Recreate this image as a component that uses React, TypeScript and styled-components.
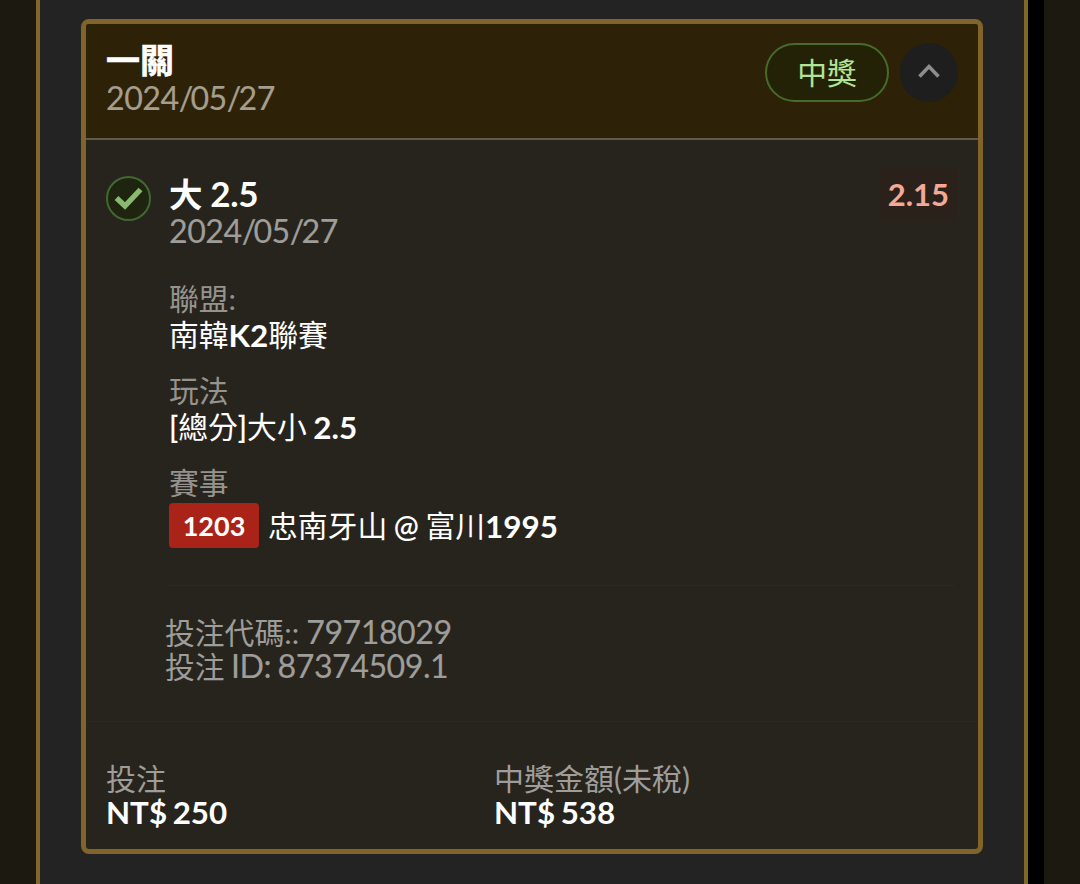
import { ReactNode } from 'react'
import styled, { createGlobalStyle } from 'styled-components'

const GlobalStyle = createGlobalStyle`
  * {
    box-sizing: border-box;
  }

  body {
    margin: 0;
    background: #1c1911;
    color: #fff;
    font-family: Lato, 'Noto Sans CJK TC', sans-serif;
    font-size: 29.8px;
    line-height: 34px;
    word-spacing: -1px;
    overflow: hidden;
  }
`

const Page = styled.div`
  display: flex;
  width: 1080px;
  height: 884px;
  padding-left: 36px;
`

const Panel = styled.main`
  width: 992px;
  padding: 19px 40px 0 41px;
  background: #232323;
  border: solid #82672b;
  border-width: 0 4px 0 4px;
`

const Gutter = styled.div`
  width: 16px;
  background: #000;
`

const Ticket = styled.article`
  display: flex;
  flex-direction: column;
  width: 902px;
  height: 835px;
  border: 5px solid #80642a;
  border-radius: 8px;
  background: #27241e;
  overflow: hidden;
`

const TicketHeader = styled.header`
  display: flex;
  align-items: flex-start;
  flex: 0 0 116px;
  padding: 19px 20px 0 20px;
  border-bottom: 2px solid #625b46;
  background: #2d2208;
`

const Heading = styled.div`
  flex: 1;
`

const HeaderTitle = styled.div`
  height: 39px;
  font-size: 34px;
  font-weight: 700;
  line-height: 34px;
  -webkit-text-stroke: 0.6px #fff;
`

const SelectionTitle = styled.div`
  height: 39px;
  font-size: 33.5px;
  font-weight: 700;
  line-height: 34px;
  word-spacing: -0.5px;
  white-space: nowrap;

  span {
    font-size: 35px;
    letter-spacing: -0.2px;
  }
`

const Muted = styled.div<{ $warm?: boolean }>`
  height: 34px;
  color: ${(props) => (props.$warm ? '#a59e8f' : '#9f9d9a')};
  white-space: nowrap;
`

const Num = styled.span`
  font-size: 32.2px;
  letter-spacing: -0.5px;
  line-height: 30px;
  -webkit-text-stroke: 0.15px currentColor;
`

const Slash = styled.span`
  letter-spacing: -2.8px;
`

const Status = styled.div`
  display: flex;
  align-items: center;
  justify-content: center;
  width: 124px;
  height: 59px;
  margin-right: 11px;
  border: 2px solid #466b2b;
  border-radius: 30px;
  background: #232206;
  color: #b3e397;
`

const Toggle = styled.button`
  display: flex;
  align-items: center;
  justify-content: center;
  width: 58px;
  height: 59px;
  padding: 0 0 3px;
  border: 0;
  border-radius: 50%;
  background: #1e1e1f;
`

const Selection = styled.section`
  display: flex;
  align-items: flex-start;
  flex: 0 0 582px;
  padding: 36px 24px 0 20px;
  border-bottom: 1px solid #2b2924;
`

const CheckIcon = styled.svg`
  flex: none;
  width: 45px;
  height: 45px;
  margin-right: 18px;
`

const Details = styled.div`
  flex: 1;
`

const SelectionTop = styled.div`
  display: flex;
  justify-content: space-between;
`

const Odds = styled.div`
  height: 54px;
  margin: -8px -4px 0 0;
  padding: 0 9px;
  border-radius: 4px;
  background: #2b211b;
  color: #f3a898;
  font-size: 31px;
  font-weight: 700;
  line-height: 53px;
`

const Fields = styled.dl`
  display: flex;
  flex-direction: column;
  gap: 20px;
  margin: 31px 0 0;
`

const FieldBox = styled.div`
  height: 72px;
`

const FieldLabel = styled.dt`
  height: 37px;
  color: #96938e;
  line-height: 37px;
`

const FieldValue = styled.dd`
  display: flex;
  align-items: center;
  margin: 0;
  line-height: 36px;
  white-space: pre;

  b {
    font-size: 31.4px;
    font-weight: 700;
  }

  i {
    font-style: normal;
    font-weight: 600;
  }
`

const Match = styled.div`
  display: flex;
  align-items: center;
  margin-top: 2px;
`

const MatchCode = styled.span`
  width: 90px;
  height: 45px;
  margin-right: 9px;
  border-radius: 4px;
  background: #a92318;
  font-size: 27px;
  font-weight: 700;
  line-height: 46px;
  text-align: center;
`

const Codes = styled.div`
  margin-top: 49px;
  padding-top: 30px;
  border-top: 1px solid #2c2a24;

  > div {
    margin-left: -4px;
    word-spacing: -0.5px;
  }

  > div + div {
    word-spacing: -1.2px;
  }
`

const Totals = styled.footer`
  display: grid;
  grid-template-columns: 388px 1fr;
  padding: 39px 20px 0 20px;
  font-size: 30px;
`

const Amount = styled.div`
  font-size: 31.3px;
  font-weight: 700;
  line-height: 34px;
  word-spacing: -2px;
`

const TicketDate = ({ value }: { value: string }) => {
  const [year, month, day] = value.split('/')

  return (
    <Num>
      {year}
      <Slash>/</Slash>
      {month}
      <Slash>/</Slash>
      {day}
    </Num>
  )
}

const Field = ({ label, children }: { label: string; children: ReactNode }) => (
  <FieldBox>
    <FieldLabel>{label}</FieldLabel>
    <FieldValue>{children}</FieldValue>
  </FieldBox>
)

const Total = ({ label, value }: { label: string; value: number }) => (
  <div>
    <Muted>{label}</Muted>
    <Amount>NT$ {value}</Amount>
  </div>
)

const App = () => (
  <>
    <GlobalStyle />
    <Page>
      <Panel>
        <Ticket>
          <TicketHeader>
            <Heading>
              <HeaderTitle>一關</HeaderTitle>
              <Muted $warm>
                <TicketDate value="2024/05/27" />
              </Muted>
            </Heading>
            <Status>中獎</Status>
            <Toggle aria-label="收合">
              <svg width="24" height="18" viewBox="0 0 24 18" fill="none">
                <path d="M2.5 14.5L12 4.5L21.5 14.5" stroke="#8d8d8d" strokeWidth="3.6" />
              </svg>
            </Toggle>
          </TicketHeader>
          <Selection>
            <CheckIcon viewBox="0 0 45 45" fill="none">
              <circle cx="22.5" cy="22.5" r="21.5" fill="#1f2411" stroke="#3f692f" strokeWidth="2" />
              <path d="M10.5 22L19 30L34.5 13.5" stroke="#8aba70" strokeWidth="5.4" />
            </CheckIcon>
            <Details>
              <SelectionTop>
                <div>
                  <SelectionTitle>
                    大 <span>2.5</span>
                  </SelectionTitle>
                  <Muted>
                    <TicketDate value="2024/05/27" />
                  </Muted>
                </div>
                <Odds>2.15</Odds>
              </SelectionTop>
              <Fields>
                <Field label="聯盟:">
                  南韓<b>K2</b>聯賽
                </Field>
                <Field label="玩法">
                  <i>[</i>總分<i>]</i>大小 <b>2.5</b>
                </Field>
                <Field label="賽事">
                  <Match>
                    <MatchCode>1203</MatchCode>
                    忠南牙山 <i>@</i> 富川<b>1995</b>
                  </Match>
                </Field>
              </Fields>
              <Codes>
                <Muted>
                  投注代碼:: <Num>79718029</Num>
                </Muted>
                <Muted>
                  投注 <Num>ID: 87374509.1</Num>
                </Muted>
              </Codes>
            </Details>
          </Selection>
          <Totals>
            <Total label="投注" value={250} />
            <Total label="中獎金額(未稅)" value={538} />
          </Totals>
        </Ticket>
      </Panel>
      <Gutter />
    </Page>
  </>
)

export default App
